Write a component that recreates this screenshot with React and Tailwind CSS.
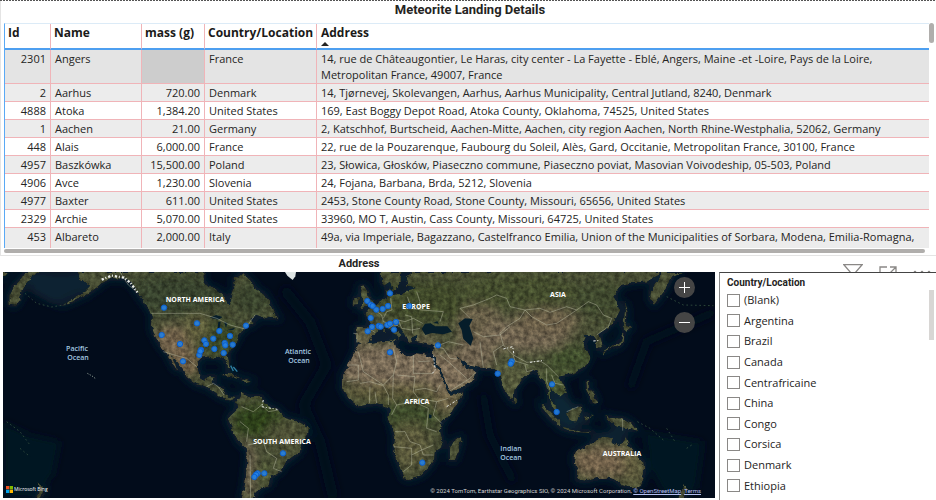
const rows = [
  ["2301", "Angers", "", "France", "14, rue de Châteaugontier, Le Haras, city center - La Fayette - Eblé, Angers, Maine -et -Loire, Pays de la Loire, Metropolitan France, 49007, France"],
  ["2", "Aarhus", "720.00", "Denmark", "14, Tjørnevej, Skolevangen, Aarhus, Aarhus Municipality, Central Jutland, 8240, Denmark"],
  ["4888", "Atoka", "1,384.20", "United States", "169, East Boggy Depot Road, Atoka County, Oklahoma, 74525, United States"],
  ["1", "Aachen", "21.00", "Germany", "2, Katschhof, Burtscheid, Aachen-Mitte, Aachen, city region Aachen, North Rhine-Westphalia, 52062, Germany"],
  ["448", "Alais", "6,000.00", "France", "22, rue de la Pouzarenque, Faubourg du Soleil, Alès, Gard, Occitanie, Metropolitan France, 30100, France"],
  ["4957", "Baszkówka", "15,500.00", "Poland", "23, Słowica, Głosków, Piaseczno commune, Piaseczno poviat, Masovian Voivodeship, 05-503, Poland"],
  ["4906", "Avce", "1,230.00", "Slovenia", "24, Fojana, Barbana, Brda, 5212, Slovenia"],
  ["4977", "Baxter", "611.00", "United States", "2453, Stone County Road, Stone County, Missouri, 65656, United States"],
  ["2329", "Archie", "5,070.00", "United States", "33960, MO T, Austin, Cass County, Missouri, 64725, United States"],
  ["453", "Albareto", "2,000.00", "Italy", "49a, via Imperiale, Bagazzano, Castelfranco Emilia, Union of the Municipalities of Sorbara, Modena, Emilia-Romagna, 41017, Italy"],
];

const countries = ["(Blank)", "Argentina", "Brazil", "Canada", "Centrafricaine", "China", "Congo", "Corsica", "Denmark", "Ethiopia"];

// Landmasses, drawn on a 2136 x 678 grid (three units to a pixel).
const land = [
  // North and Central America
  "230,51 240,75 258,84 272,94 255,110 215,135 175,152 215,140 262,118 290,98 305,84 330,70 370,72 395,85 410,110 430,140 450,165 458,185 455,215 460,235 475,262 490,285 505,300 515,325 532,350 524,325 512,300 530,318 550,345 562,368 590,388 620,395 640,410 660,425 680,432 700,435 708,428 690,426 676,418 668,400 650,395 634,388 648,364 628,363 615,378 600,370 595,345 593,320 605,308 625,305 645,310 660,305 672,312 680,335 688,342 688,320 682,300 695,280 708,262 716,242 735,218 765,205 748,192 765,180 800,190 822,172 805,135 790,115 765,100 755,80 735,60 727,51 718,60 702,72 704,95 694,128 690,150 680,150 668,120 650,105 625,95 612,80 610,51",
  // South America
  "720,425 708,440 712,460 690,480 683,495 695,520 715,560 740,580 743,600 740,640 735,690 725,729 770,729 765,715 780,700 810,690 815,665 840,650 855,625 875,610 900,590 905,560 925,535 927,515 895,500 855,490 835,465 800,450 785,425 745,425 725,412",
  // Africa
  "1075,270 1105,265 1145,258 1180,258 1185,280 1205,290 1225,305 1245,298 1285,303 1298,312 1305,330 1325,370 1345,410 1353,422 1386,412 1385,428 1355,470 1325,505 1320,525 1325,545 1330,570 1305,590 1303,615 1285,640 1265,660 1225,673 1213,670 1200,640 1180,590 1185,550 1175,510 1165,490 1170,460 1145,450 1130,445 1075,455 1045,430 1027,400 1030,360 1045,330 1065,290",
  "1380,545 1382,560 1365,615 1350,615 1350,580 1360,560",
  // Eurasia
  "1143,51 1143,80 1152,92 1170,80 1178,108 1190,100 1202,80 1205,51 1240,51 1218,70 1222,92 1250,98 1220,108 1205,120 1175,124 1168,100 1158,108 1160,128 1140,140 1120,158 1098,168 1096,178 1108,200 1108,218 1070,218 1067,262 1090,270 1106,262 1117,240 1135,232 1152,218 1164,218 1182,238 1198,250 1202,240 1184,222 1195,212 1210,234 1225,262 1238,258 1236,244 1250,242 1252,262 1290,270 1303,276 1302,300 1312,330 1328,360 1345,402 1356,408 1395,395 1425,372 1428,352 1412,340 1388,332 1372,306 1384,316 1410,332 1450,340 1485,340 1500,365 1510,400 1530,432 1540,430 1545,400 1570,370 1590,350 1610,345 1620,370 1638,385 1645,420 1660,460 1672,475 1668,450 1650,430 1650,405 1665,410 1680,425 1698,410 1685,385 1675,365 1700,360 1730,350 1755,335 1768,310 1760,285 1745,260 1760,250 1748,240 1775,240 1790,260 1795,282 1806,275 1800,250 1795,240 1820,225 1840,200 1858,165 1850,140 1840,125 1865,90 1900,82 1940,80 1980,55 1982,51",
  "1990,51 2048,51 2020,62 1992,110 1962,150 1950,132 1952,108 1970,80",
  "75,51 125,51 92,70 72,95 64,112 60,132 45,152 28,150 28,120 40,95 60,75",
  "9,51 24,51 9,68",
  // British Isles
  "1090,90 1105,110 1110,130 1122,148 1105,155 1080,160 1090,140 1083,115 1077,95",
  "1063,130 1080,125 1077,148 1060,150",
  // Newfoundland
  "805,185 812,172 830,180 835,192",
  // Caribbean
  "665,360 685,353 710,362 722,370 700,366 680,362",
  "722,374 740,372 755,378 735,382",
  // Islands of Asia and Oceania
  "1873,138 1880,165 1878,205 1870,206 1874,170",
  "1865,215 1875,205 1895,215 1880,228",
  "1874,232 1872,256 1860,272 1835,280 1815,290 1808,302 1810,288 1840,274 1860,258 1868,240",
  "1542,428 1550,438 1546,447 1540,442",
  "1622,445 1650,470 1680,500 1678,516 1650,490 1626,462",
  "1682,515 1710,520 1745,530 1775,530 1770,534 1730,532 1690,522",
  "1698,472 1742,450 1746,470 1730,500 1705,495",
  "1752,486 1765,482 1758,505 1770,478 1785,480 1762,488 1764,502",
  "1758,378 1768,380 1768,402 1780,415 1792,440 1778,445 1768,415 1760,400",
  "1810,478 1840,490 1870,490 1895,505 1912,528 1880,520 1850,515 1830,500",
  "1725,595 1755,575 1785,560 1795,550 1810,545 1840,548 1835,560 1860,575 1870,560 1878,540 1885,570 1905,595 1930,620 1933,650 1920,690 1900,700 1862,690 1845,675 1825,668 1790,670 1755,680 1730,675 1735,650 1722,620",
  "2050,690 2062,700 2055,729 2038,729",
  "115,680 132,698 128,718 118,729 108,729 120,708",
  "1150,212 1156,212 1155,234 1149,230",
  "1170,252 1190,252 1186,262",
];

const seas = [
  "1265,222 1275,206 1292,205 1305,214 1342,214 1356,230 1330,238 1295,234 1276,240",
  "1375,205 1395,190 1418,192 1408,212 1420,250 1412,272 1390,252 1385,225",
  "1300,204 1312,198 1316,206",
  "630,188 648,180 668,186 655,194",
  "655,200 662,200 658,226 652,226",
  "672,200 682,204 678,218",
  "680,226 705,218 700,224",
  "1287,478 1295,480 1294,490 1287,490",
];

// Vegetation and desert: x, y, rx, ry, colour.
const biomes = [
  [530, 120, 160, 60, "#3d4a31"], [520, 260, 60, 50, "#7b6a51"], [560, 325, 45, 35, "#79664c"],
  [650, 250, 70, 50, "#3d4d2c"], [590, 220, 40, 45, "#65633f"], [760, 130, 60, 50, "#404b33"],
  [780, 500, 80, 50, "#33471f"], [850, 540, 55, 45, "#54583a"], [745, 640, 22, 90, "#6e6450"],
  [790, 655, 30, 30, "#57613a"], [1170, 330, 190, 62, "#84755f"], [1170, 410, 150, 24, "#635f3d"],
  [1230, 480, 90, 45, "#42512d"], [1230, 570, 60, 70, "#62603f"], [1340, 440, 40, 30, "#786c4e"],
  [1350, 350, 90, 60, "#86765f"], [1300, 140, 190, 60, "#47512f"], [1440, 220, 70, 80, "#726850"],
  [1420, 300, 70, 50, "#776b54"], [1580, 240, 130, 50, "#7c6e58"], [1640, 200, 100, 40, "#746850"],
  [1550, 110, 190, 50, "#4b5433"], [1710, 310, 70, 40, "#465631"], [1540, 370, 50, 55, "#5c6041"],
  [1660, 400, 45, 55, "#4e5b34"], [1800, 130, 80, 50, "#454f30"], [1810, 620, 100, 50, "#7c6a51"],
  [1900, 630, 30, 60, "#6a6644"], [1090, 245, 35, 20, "#6f674a"], [1280, 255, 40, 15, "#6f684e"],
];

const borders = [
  "455,175 600,175 650,190 690,210 735,222 765,180", "490,290 530,302 560,310 590,335", "410,110 385,90 360,51",
  "1075,290 1090,350 1150,390 1180,360 1190,320 1180,280", "1045,330 1075,330 1075,375 1040,380", "1240,300 1240,355 1300,355",
  "1190,360 1245,365 1240,410 1255,430 1310,440 1345,430", "1080,385 1110,380 1150,392 1165,420 1165,450", "1110,395 1108,445",
  "1125,410 1130,445", "1180,360 1178,430 1190,450 1175,480", "1190,450 1240,440 1285,460 1280,520 1310,530", "1185,530 1215,530 1230,560 1260,570 1270,600 1300,600",
  "1180,575 1235,580 1235,630 1210,650", "1235,600 1265,585 1300,570", "1325,505 1300,480 1310,440", "1245,405 1275,400 1310,410 1320,390",
  "725,455 760,470 785,450 805,470 835,465", "743,570 790,560 800,590 830,610 820,640 845,650", "750,600 752,729", "720,500 745,520 740,560",
  "1125,232 1108,222", "1128,168 1145,180 1150,200 1165,205 1195,195 1215,200 1240,190 1268,205", "1172,130 1176,165 1160,170 1150,190",
  "1222,125 1235,160 1265,165 1330,170 1320,200", "1215,180 1235,185 1238,235", "1250,110 1260,140 1255,165", "1195,195 1205,220 1235,225 1260,220",
  "1410,190 1380,160 1420,150 1470,130 1490,120 1520,130 1530,155 1575,165 1560,190 1520,215 1500,235 1510,270",
  "1575,165 1620,160 1650,172 1700,155 1730,165 1670,205 1640,210 1595,185 1575,165", "1730,165 1765,140 1790,150 1810,180 1835,190 1825,215 1790,240",
  "1420,230 1450,245 1500,240 1530,215", "1440,260 1445,300 1450,338", "1510,270 1480,290 1490,330", "1510,270 1540,300 1580,322 1620,318 1640,330 1660,350 1675,365",
  "1540,302 1545,318 1585,330", "1575,330 1580,350 1600,345", "1640,340 1640,380 1650,405", "1655,360 1665,385 1690,390", "1300,275 1330,280 1350,310 1372,312",
  "1303,276 1345,260 1390,270", "1320,300 1345,320 1400,370", "1350,408 1410,370 1428,352", "1868,491 1868,527", "1700,470 1735,455", "620,395 640,385 655,395 672,420",
  "1165,220 1180,210 1195,212", "1060,235 1072,236 1070,262", "1255,320 1290,318",
];

// Landing sites on the same grid.
const sites = [
  [492, 158], [591, 205], [485, 240], [540, 267], [549, 319], [613, 256], [618, 267], [640, 251], [658, 228], [690, 243],
  [674, 264], [676, 271], [698, 269], [643, 282], [603, 285], [598, 300], [601, 289], [671, 294], [738, 212],
  [849, 595], [793, 655], [773, 655], [768, 659], [763, 666],
  [1170, 115], [1102, 138], [1112, 149], [1118, 153], [1129, 164], [1148, 162], [1164, 153], [1228, 153], [1112, 189],
  [1103, 229], [1116, 216], [1136, 213], [1142, 215], [1162, 210], [1170, 206], [1188, 201], [1182, 224], [1170, 292], [1314, 271],
  [1267, 623], [1535, 319], [1532, 326], [1493, 356], [1656, 388], [1670, 471],
];

const continents = [
  ["NORTH AMERICA", 195, 302], ["EUROPE", 416, 309], ["ASIA", 558, 297], ["AFRICA", 417, 404], ["SOUTH AMERICA", 282, 444], ["AUSTRALIA", 622, 456],
];
const oceans = [
  ["Pacific", 77, 351], ["Ocean", 78, 360], ["Atlantic", 298, 354], ["Ocean", 299, 363], ["Indian", 511, 451], ["Ocean", 511, 460],
];

function WorldMap() {
  return (
    <svg viewBox="3 272 712 226" preserveAspectRatio="xMidYMid slice" className="block h-full w-full" role="img" aria-label="World map of meteorite landings">
      <defs>
        <clipPath id="frame"><rect x="3" y="272" width="712" height="226" /></clipPath>
        <filter id="terrain" x="0" y="0" width="100%" height="100%" colorInterpolationFilters="sRGB">
          <feTurbulence type="fractalNoise" baseFrequency="0.045" numOctaves="4" seed="8" result="n" />
          <feDisplacementMap in="SourceGraphic" in2="n" scale="16" xChannelSelector="R" yChannelSelector="G" result="d" />
          <feTurbulence type="fractalNoise" baseFrequency="0.07" numOctaves="4" seed="3" result="g" />
          <feColorMatrix in="g" type="matrix" values="1 0 0 0 0  1 0 0 0 0  1 0 0 0 0  0 0 0 0 1" result="gray" />
          <feComposite in="gray" in2="d" operator="arithmetic" k1="0.9" k2="0" k3="0.45" k4="0" result="m" />
          <feComposite in="m" in2="d" operator="in" />
        </filter>
        <filter id="soft" x="-50%" y="-50%" width="200%" height="200%"><feGaussianBlur stdDeviation="16" /></filter>
        <filter id="shelf" x="0" y="0" width="100%" height="100%"><feGaussianBlur stdDeviation="12" /></filter>
        <clipPath id="land">{land.map((p) => <polygon key={p} points={p} />)}</clipPath>
      </defs>
      <g clipPath="url(#frame)">
        <rect x="3" y="272" width="712" height="226" fill="#020c1b" />
        <g transform="translate(0 255) scale(0.333333)">
          <g filter="url(#shelf)">
            <g fill="#0a2430" stroke="#0a2430" strokeWidth="14">{land.map((p) => <polygon key={p} points={p} />)}</g>
            <polygon points="90,51 240,51 265,95 160,150 90,110" fill="#0b2230" />
            <polygon points="1640,430 1700,420 1760,500 1700,520" fill="#0b2734" />
            <polygon points="1880,520 1850,560 1800,545 1760,540" fill="#0b2734" />
            <polygon points="9,500 90,540 180,560 160,660 90,729 9,729" fill="#041723" />
            <polygon points="1930,530 2110,560 2090,700 2000,729 1950,640" fill="#041722" />
            <path d="M850 100 L930 200 L980 330 L910 450 L960 560 L1000 729" fill="none" stroke="#03101f" strokeWidth="30" />
            <path d="M1450 420 L1470 540 L1540 680 M2145 170 L1940 260 L1890 400" fill="none" stroke="#03111f" strokeWidth="22" />
          </g>
          <g filter="url(#terrain)">
            <rect x="9" y="51" width="2136" height="678" fill="none" />
            <g clipPath="url(#land)">
              <rect x="9" y="51" width="2136" height="678" fill="#4f5539" />
              <g filter="url(#soft)">
                {biomes.map(([x, y, rx, ry, c]) => <ellipse key={x + "," + y} cx={x} cy={y} rx={rx} ry={ry} fill={c} />)}
              </g>
            </g>
          </g>
          <g fill="#061d2a">{seas.map((p) => <polygon key={p} points={p} />)}</g>
          <g fill="none" stroke="#c3c5ac" strokeOpacity="0.65" strokeWidth="2" strokeLinejoin="round">
            {borders.map((p) => <polyline key={p} points={p} />)}
          </g>
          <g fill="none" stroke="#e9ece8" strokeDasharray="7 5 3 6">
            <path d="M305 74 L335 62 L372 68 L392 84 L412 112" strokeWidth="7" />
            <path d="M1510 282 L1538 275 L1542 300 M1590 322 L1632 316 M1340 455 L1370 436 M790 435 L785 455 L832 463 M1297 355 L1306 345 L1300 300 M1780 258 L1800 256" strokeWidth="3" />
          </g>
          <polygon points="855,51 888,51 886,64 878,75 862,62" fill="#dfe5e5" />
          <g fill="none" stroke="#2b4539" strokeWidth="3" strokeDasharray="5 8">
            <path d="M75 115 L110 145 L155 156 L200 148" />
            <path d="M20 500 L60 530 L90 570 M60 580 L90 605 M2000 520 L2025 560 M2060 580 L2075 570 M1912 500 L1950 520 L1990 555 M2000 125 L2050 150 L2140 152" />
          </g>
          <path d="M262 355 L275 362 L288 372" stroke="#7f8e87" strokeWidth="3" strokeDasharray="4 4" fill="none" />
          <path d="M692 332 L700 348 M700 336 L712 350" stroke="#2f7fa3" strokeWidth="4" fill="none" />
        </g>
        <g textAnchor="middle" className="font-['Open_Sans',sans-serif] text-[7px] font-bold" fill="#ffffff">
          {continents.map(([t, x, y]) => <text key={t} x={x} y={y}>{t}</text>)}
        </g>
        <g textAnchor="middle" className="font-['Open_Sans',sans-serif] text-[7px] font-semibold" fill="#a3c8e0">
          {oceans.map(([t, x, y]) => <text key={t + x + y} x={x} y={y}>{t}</text>)}
        </g>
        <g transform="translate(0 255) scale(0.333333)" fill="#2583e4" fillOpacity="0.88" stroke="#0b5ed0" strokeWidth="3">
          {sites.map(([x, y]) => <circle key={x + "," + y} cx={x} cy={y} r="8" />)}
        </g>
      </g>
    </svg>
  );
}

const cell = "border-r border-b border-[#f0b4b8] px-1 pt-px pb-0 align-top leading-4";

function DetailsTable() {
  return (
    <section className="border-b border-l border-[#e4e4e4] pb-[2px] pl-[3px]">
      <h1 className="h-[22px] pt-px text-center font-['Roboto',sans-serif] text-[13px] leading-4 font-bold text-[#252423]">Meteorite Landing Details</h1>
      <div className="flex items-start">
        <div className="min-w-0 flex-1">
          <div className="h-[225px] overflow-hidden">
            <table className="w-full table-fixed border-separate border-spacing-0 border-t border-l border-t-[#dcebf7] border-l-[#5aa9f5] text-[11px]">
              <colgroup>
                <col className="w-[46px]" /><col className="w-[91px]" /><col className="w-[63px]" /><col className="w-[112px]" /><col />
              </colgroup>
              <thead>
                <tr className="h-[26px] text-left text-xs">
                  {["Id", "Name", "mass (g)", "Country/Location", "Address"].map((h, i) => (
                    <th key={h} scope="col" className={"relative border-b-2 border-b-[#4d9ff0] py-0 pr-0 align-top leading-[18px] font-bold whitespace-nowrap text-[#1b1a19] " + (i < 4 ? "border-r border-r-[#f0b4b8] pl-[3px]" : "pl-1")}>
                      {h}
                      {i === 4 && <span className="absolute bottom-[2px] left-1 h-0 w-0 border-x-4 border-b-4 border-x-transparent border-b-[#252423]" />}
                    </th>
                  ))}
                </tr>
              </thead>
              <tbody>
                {rows.map((r, i) => (
                  <tr key={r[0]} className={i === 0 ? "h-[34px] bg-[#e4e4e4]" : i === 2 || i === 4 || i === 6 || i === 8 ? "bg-white" : "bg-[#ececec]"}>
                    <td className={cell + " text-right"}>{r[0]}</td>
                    <td className={cell}>{r[1]}</td>
                    <td className={cell + " text-right " + (i === 0 ? "bg-[#cdcdcd]" : "")}>{r[2]}</td>
                    <td className={cell}>{r[3]}</td>
                    <td className="border-b border-[#f0b4b8] pt-px pr-2 pb-0 pl-1 align-top leading-4">{r[4]}</td>
                  </tr>
                ))}
              </tbody>
            </table>
          </div>
          <div className="mt-px mr-1 h-1 rounded-full bg-[#b0aeac]" />
        </div>
        <div className="w-[7px]"><div className="h-5 w-[5px] rounded-full bg-[#b0aeac]" /></div>
      </div>
    </section>
  );
}

export default function App() {
  return (
    <main className="flex h-screen flex-col overflow-hidden bg-white font-['Open_Sans','Noto_Sans',sans-serif] text-[#252423]">
      <div className="h-px shrink-0 bg-[repeating-linear-gradient(90deg,#555_0_2px,#fff_2px_3px)]" />
      <DetailsTable />
      <div className="flex min-h-0 flex-1">
        <section className="flex min-w-0 flex-1 flex-col pr-1 pb-[2px] pl-[3px]">
          <h2 className="h-4 shrink-0 pt-px text-center font-['Roboto',sans-serif] text-[11px] leading-[14px] font-bold">Address</h2>
          <div className="relative min-h-0 flex-1 overflow-hidden">
            <WorldMap />
            <div className="absolute top-[5px] right-5 flex flex-col gap-[14px]">
              <button type="button" aria-label="Zoom in" className="grid size-[21px] place-items-center rounded-full bg-[#454545] text-white">
                <svg viewBox="0 0 11 11" className="size-[11px]" fill="none" stroke="currentColor"><path d="M5.5 0v11M0 5.5h11" /></svg>
              </button>
              <button type="button" aria-label="Zoom out" className="grid size-[21px] place-items-center rounded-full bg-[#454545] text-white">
                <svg viewBox="0 0 11 11" className="size-[11px]" fill="none" stroke="currentColor"><path d="M0 5.5h11" /></svg>
              </button>
            </div>
            <div className="absolute bottom-[5px] left-[3px] flex items-center gap-px text-[5px] leading-2 text-white">
              <svg viewBox="0 0 7 7" className="size-[7px]"><path fill="#f25022" d="M0 0h3.3v3.3H0z" /><path fill="#7fba00" d="M3.7 0H7v3.3H3.7z" /><path fill="#00a4ef" d="M0 3.7h3.3V7H0z" /><path fill="#ffb900" d="M3.7 3.7H7V7H3.7z" /></svg>
              <span>Microsoft Bing</span>
            </div>
            <p className="absolute right-[14px] bottom-[3px] font-['Roboto',sans-serif] text-[6px] leading-2 whitespace-nowrap text-[#d4d4d4]">
              © 2024 TomTom, Earthstar Geographics SIO, © 2024 Microsoft Corporation, <a href="#osm" className="text-[#b4bff0] underline">© OpenStreetMap</a>&nbsp;&nbsp;<a href="#terms" className="text-[#b4bff0] underline">Terms</a>
            </p>
          </div>
        </section>
        <aside className="flex w-[217px] shrink-0 flex-col">
          <div className="flex h-4 shrink-0 items-start justify-end gap-4 overflow-hidden pt-2 pr-[5px] text-[#8a8886]">
            <svg viewBox="0 0 20 18" className="h-[18px] w-5 shrink-0" fill="none" stroke="currentColor" strokeWidth="1.3"><path d="M.9.7h18.2L12 9v8H8V9z" /></svg>
            <svg viewBox="0 0 18 18" className="size-[18px] shrink-0" fill="none" stroke="currentColor" strokeWidth="1.3"><path d="M8 3H1v14h14v-7M11 3h6v6M17 3L8 12" /></svg>
            <svg viewBox="0 0 18 18" className="size-[18px] shrink-0" fill="currentColor"><circle cx="2" cy="8" r="1.3" /><circle cx="9" cy="8" r="1.3" /><circle cx="16" cy="8" r="1.3" /></svg>
          </div>
          <fieldset className="flex min-h-0 flex-1 flex-col border-t border-l border-t-[#444] border-l-[#888] pb-1 pl-[7px]">
            <legend className="float-left h-[17px] pt-[3px] font-['Roboto',sans-serif] text-[10px] leading-[14px] font-bold">Country/Location</legend>
            <div className="flex min-h-0 w-full flex-1 items-start justify-between">
              <ul className="flex h-full flex-col">
                {countries.map((c) => (
                  <li key={c} className="flex flex-1 items-center">
                    <label className="flex items-center gap-1 text-[11px] leading-4">
                      <input type="checkbox" className="size-[13px] appearance-none border border-[#8a8886] bg-white" />
                      {c}
                    </label>
                  </li>
                ))}
              </ul>
              <div className="mr-[2px] h-[50px] w-[5px] bg-[#d8d6d4]" />
            </div>
          </fieldset>
        </aside>
      </div>
    </main>
  );
}
